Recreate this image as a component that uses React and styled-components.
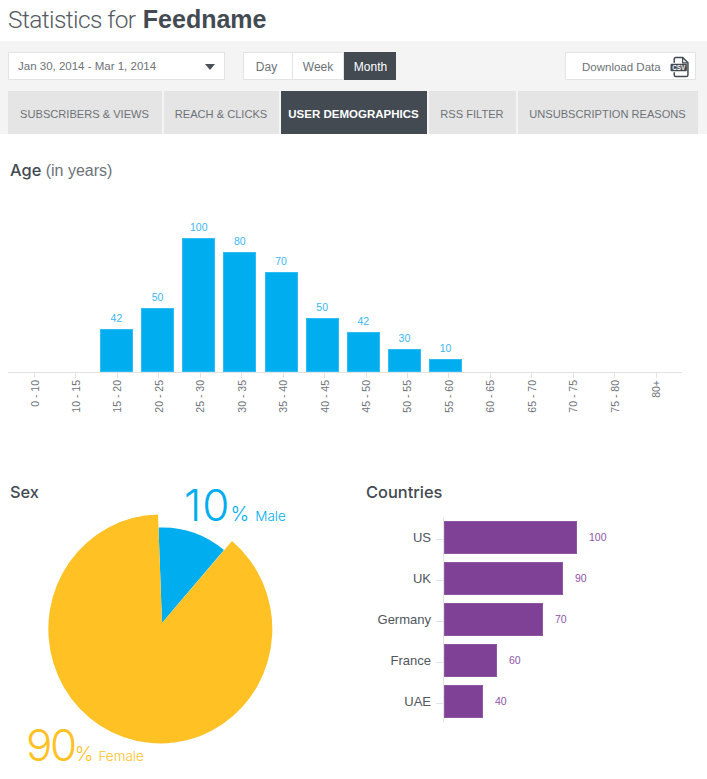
import { Fragment } from "react";
import styled, { createGlobalStyle } from "styled-components";

const GlobalStyle = createGlobalStyle`
  html, body { margin: 0; padding: 0; background: #fff; }
  body { font-family: "Liberation Sans", Arial, sans-serif; color: #434a52; }
`;

const Page = styled.div`
  width: 707px;
  height: 779px;
  overflow: hidden;
`;

const Title = styled.h1`
  margin: 0;
  height: 41px;
  padding: 5px 0 0 8px;
  box-sizing: border-box;
  font-size: 24.5px;
  line-height: 29px;
  font-weight: 300;
  letter-spacing: -0.6px;
  font-family: Roboto, "Liberation Sans", sans-serif;
  color: #535a61;
  b {
    font-weight: 700;
    font-size: 25px;
    margin-left: 2px;
    letter-spacing: 0;
    color: #434a52;
    font-family: "Liberation Sans", sans-serif;
  }
`;

const Band = styled.div`
  background: #f4f4f4;
  height: 93px;
  padding: 11px 10px 0 8px;
  box-sizing: border-box;
`;

const Toolbar = styled.div`
  display: flex;
  align-items: stretch;
  height: 28px;
`;

const DateSelect = styled.div`
  width: 217px;
  box-sizing: border-box;
  background: #fff;
  border: 1px solid #e3e3e3;
  display: flex;
  align-items: center;
  justify-content: space-between;
  padding: 0 9px 1px 9px;
  font-size: 11.5px;
  color: #6d7278;
`;

const Caret = styled.span`
  width: 0;
  height: 0;
  margin-top: 2px;
  border-left: 5px solid transparent;
  border-right: 5px solid transparent;
  border-top: 6px solid #4a5159;
`;

const Segments = styled.div`
  display: flex;
  margin-left: 18px;
`;

const Segment = styled.div`
  width: ${(p) => p.$w}px;
  box-sizing: border-box;
  display: flex;
  align-items: center;
  justify-content: center;
  padding: 2px ${(p) => p.$pr || 0}px 0 ${(p) => p.$pl || 0}px;
  font-size: 12px;
  background: ${(p) => (p.$active ? "#434a52" : "#fff")};
  color: ${(p) => (p.$active ? "#fff" : "#6d7278")};
  border: 1px solid ${(p) => (p.$active ? "#434a52" : "#e3e3e3")};
  & + & { border-left-width: 0; }
`;

const Download = styled.div`
  margin: 0 1px 0 auto;
  width: 131px;
  box-sizing: border-box;
  background: #fff;
  border: 1px solid #e3e3e3;
  display: flex;
  align-items: center;
  gap: 9px;
  padding: 1px 0 0 16px;
  font-size: 11.5px;
  color: #6d7278;
`;

const Tabs = styled.div`
  display: flex;
  gap: 2px;
  margin-top: 11px;
  height: 43px;
`;

const Tab = styled.div`
  flex: none;
  width: ${(p) => p.$w}px;
  display: flex;
  align-items: center;
  justify-content: center;
  padding: 3px 1px 0 0;
  box-sizing: border-box;
  white-space: nowrap;
  font-size: ${(p) => (p.$active ? 11.5 : 11.1)}px;
  font-weight: ${(p) => (p.$active ? 700 : 400)};
  background: ${(p) => (p.$active ? "#434a52" : "#e5e5e5")};
  color: ${(p) => (p.$active ? "#fff" : "#6d7278")};
`;

const SectionTitle = styled.h2`
  margin: 0;
  font-family: Inter, "Liberation Sans", sans-serif;
  font-size: 16.4px;
  line-height: 20px;
  font-weight: 500;
  color: #434a52;
  span {
    font-family: "Liberation Sans", sans-serif;
    font-weight: 400;
    color: #6d7278;
    font-size: 16px;
  }
`;

const AgeSection = styled.section`
  padding: 26px 0 0 10px;
`;

const AgePlot = styled.div`
  margin: 28px 0 0 -2px;
  width: 674px;
  height: 164px;
  display: flex;
  align-items: flex-end;
  padding-left: 5.6px;
  box-sizing: border-box;
  border-bottom: 1px solid #e2e2e2;
`;

const AgeColumn = styled.div`
  width: 41.15px;
  flex: none;
  display: flex;
  flex-direction: column;
  align-items: center;
  justify-content: flex-end;
`;

const AgeValue = styled.div`
  font-size: 10.5px;
  line-height: 12px;
  margin-bottom: 5px;
  color: #3cb6f2;
`;

const AgeBar = styled.div`
  width: 33px;
  height: ${(p) => p.$h}px;
  background: #00aeef;
  box-shadow: inset 0 0 0 1px rgba(255, 255, 255, 0.18);
`;

const AgeLabels = styled.div`
  display: flex;
  margin-left: 3.8px;
`;

const AgeLabel = styled.div`
  width: 41.45px;
  flex: none;
  display: flex;
  flex-direction: column;
  align-items: center;
  font-size: 10.5px;
  color: #6d7278;
  &::before {
    content: "";
    width: 1px;
    height: 5px;
    background: #e2e2e2;
    margin-bottom: 2px;
  }
  span {
    writing-mode: vertical-rl;
    transform: rotate(180deg);
    white-space: nowrap;
  }
`;

const Lower = styled.div`
  display: flex;
  margin-top: 69px;
`;

const SexPanel = styled.section`
  width: 356px;
  height: 300px;
  padding-left: 10px;
  box-sizing: border-box;
  position: relative;
`;

const PieSvg = styled.svg`
  position: absolute;
  left: 0;
  top: 0;
`;

const PieLabel = styled.div`
  position: absolute;
  left: ${(p) => p.$x}px;
  top: ${(p) => p.$y}px;
  color: ${(p) => p.$color};
  white-space: nowrap;
  line-height: 1;
  font-size: 13.5px;
  font-family: Inter, "Liberation Sans", sans-serif;
  font-weight: 300;
  b { font-weight: 300; font-size: 44px; letter-spacing: ${(p) => p.$ls}px; }
  i { font-style: normal; font-size: 20px; margin: 0 ${(p) => p.$after}px 0 0; }
`;

const CountryPanel = styled.section`
  flex: 1;
  padding-left: 10px;
`;

const CountryList = styled.div`
  margin: 15px 0 0 -10px;
  width: 300px;
  display: grid;
  grid-template-columns: 87px 1fr;
`;

const CountryName = styled.div`
  display: flex;
  align-items: center;
  justify-content: flex-end;
  position: relative;
  padding-right: 12px;
  font-size: 13px;
  color: #4f565d;
  height: 41px;
  &::after {
    content: "";
    position: absolute;
    right: 0;
    top: 22px;
    width: 7px;
    height: 1px;
    background: #e2e2e2;
  }
`;

const CountryTrack = styled.div`
  display: flex;
  align-items: center;
  gap: 12px;
  height: 41px;
  border-left: 1px solid #e2e2e2;
`;

const CountryBar = styled.div`
  width: ${(p) => p.$w}px;
  height: 33px;
  background: #7f4195;
  box-shadow: inset 0 0 0 1px rgba(255, 255, 255, 0.12);
`;

const CountryValue = styled.span`
  font-size: 10.5px;
  color: #8f54a6;
`;

const ages = [
  ["0 - 10"], ["10 - 15"], ["15 - 20", 42, 43], ["20 - 25", 50, 64], ["25 - 30", 100, 134],
  ["30 - 35", 80, 120], ["35 - 40", 70, 100], ["40 - 45", 50, 54], ["45 - 50", 42, 40],
  ["50 - 55", 30, 23], ["55 - 60", 10, 13], ["60 - 65"], ["65 - 70"], ["70 - 75"], ["75 - 80"], ["80+"],
];

const countries = [
  ["US", 133, 100], ["UK", 119, 90], ["Germany", 99, 70], ["France", 53, 60], ["UAE", 39, 40],
];

const tabs = [
  ["SUBSCRIBERS & VIEWS", 154], ["REACH & CLICKS", 115], ["USER DEMOGRAPHICS", 146, true],
  ["RSS FILTER", 87], ["UNSUBSCRIPTION REASONS", 180],
];

export default function App() {
  return (
    <Page>
      <GlobalStyle />
      <Title>Statistics for <b>Feedname</b></Title>
      <Band>
        <Toolbar>
          <DateSelect>Jan 30, 2014 - Mar 1, 2014<Caret /></DateSelect>
          <Segments>
            <Segment $w={50} $pr={3}>Day</Segment>
            <Segment $w={51}>Week</Segment>
            <Segment $w={52} $pl={2} $active>Month</Segment>
          </Segments>
          <Download>
            Download Data
            <svg width="19" height="22" viewBox="0 0 18 20">
              <path d="M4 6V2.5A1.5 1.5 0 0 1 5.5 1H12l5 5v11.5a1.5 1.5 0 0 1-1.5 1.5h-10A1.5 1.5 0 0 1 4 17.5V15" fill="none" stroke="#434a52" strokeWidth="1.4" />
              <path d="M12 1v5h5" fill="none" stroke="#434a52" strokeWidth="1.2" />
              <rect x="0.5" y="7" width="15.5" height="7" rx="1" fill="#434a52" />
              <text x="8.2" y="12.8" fontSize="6" fontWeight="700" fill="#fff" textAnchor="middle" fontFamily="Liberation Sans">CSV</text>
            </svg>
          </Download>
        </Toolbar>
        <Tabs>
          {tabs.map(([label, w, active]) => (
            <Tab key={label} $w={w} $active={active}>{label}</Tab>
          ))}
        </Tabs>
      </Band>
      <AgeSection>
        <SectionTitle>Age <span>(in years)</span></SectionTitle>
        <AgePlot>
          {ages.map(([label, value, h]) => (
            <AgeColumn key={label}>
              {value && <AgeValue>{value}</AgeValue>}
              {value && <AgeBar $h={h} />}
            </AgeColumn>
          ))}
        </AgePlot>
        <AgeLabels>
          {ages.map(([label]) => (
            <AgeLabel key={label}><span>{label}</span></AgeLabel>
          ))}
        </AgeLabels>
      </AgeSection>
      <Lower>
        <SexPanel>
          <SectionTitle>Sex</SectionTitle>
          <PieSvg width="356" height="300" viewBox="0 482 356 300">
            <path d="M162 623 L158.5 527.5 A96 96 0 0 1 224 550 Z" fill="#00aeef" />
            <path d="M162 623 L232 541 A112 114.5 0 1 1 158 514.5 Z" fill="#ffc124" />
          </PieSvg>
          <PieLabel $x={184} $y={1} $ls={1} $after={6} $color="#00aeef"><b>10</b><i>%</i>Male</PieLabel>
          <PieLabel $x={26} $y={241} $ls={-2.5} $after={5} $color="#ffc124"><b>90</b><i>%</i>Female</PieLabel>
        </SexPanel>
        <CountryPanel>
          <SectionTitle>Countries</SectionTitle>
          <CountryList>
            {countries.map(([name, w, value]) => (
              <Fragment key={name}>
                <CountryName>{name}</CountryName>
                <CountryTrack>
                  <CountryBar $w={w} />
                  <CountryValue>{value}</CountryValue>
                </CountryTrack>
              </Fragment>
            ))}
          </CountryList>
        </CountryPanel>
      </Lower>
    </Page>
  );
}
